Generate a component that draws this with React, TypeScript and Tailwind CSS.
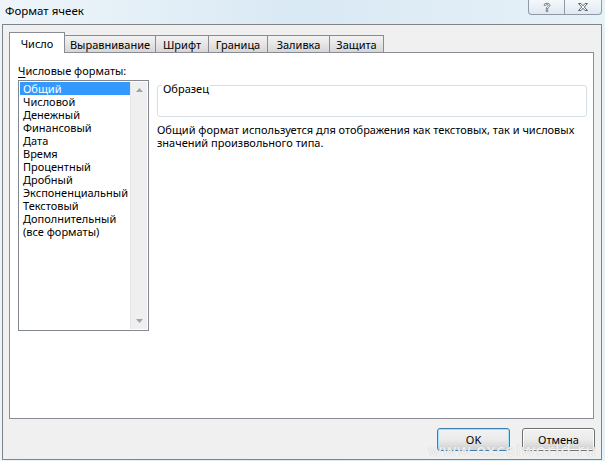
import React from 'react'

const formats = [
  'Общий',
  'Числовой',
  'Денежный',
  'Финансовый',
  'Дата',
  'Время',
  'Процентный',
  'Дробный',
  'Экспоненциальный',
  'Текстовый',
  'Дополнительный',
  '(все форматы)',
]

const tabs = [
  { label: 'Число', w: 'w-[56px]' },
  { label: 'Выравнивание', w: 'w-[92px]' },
  { label: 'Шрифт', w: 'w-[54px]' },
  { label: 'Граница', w: 'w-[60px]' },
  { label: 'Заливка', w: 'w-[63px]' },
  { label: 'Защита', w: 'w-[55px]' },
]

// Title bar caption buttons (help + close)
const CaptionButtons: React.FC = () => (
  <div className="flex h-[15px] mr-[3px]">
    <div className="w-[37px] h-full flex items-center justify-center border border-t-0 border-[#8d9aa6] rounded-bl-[4px] bg-gradient-to-b from-[#f4f8fb] to-[#dfe9f1]">
      <svg width="8" height="11" viewBox="0 0 8 11">
        <path
          d="M1 3.2 C1 0.6 7 0.6 7 3.2 C7 5 4.8 5 4.8 6.8 L3.2 6.8 C3.2 4.6 5.3 4.4 5.3 3.3 C5.3 2 2.7 2 2.7 3.4 Z M3.2 7.8 L4.8 7.8 L4.8 9.6 L3.2 9.6 Z"
          fill="#ffffff"
          stroke="#5b6670"
          strokeWidth="0.8"
          strokeLinejoin="round"
        />
      </svg>
    </div>
    <div className="w-[38px] h-full -ml-px flex items-center justify-center border border-t-0 border-[#8d9aa6] rounded-br-[4px] bg-gradient-to-b from-[#f4f8fb] to-[#dfe9f1]">
      <svg width="12" height="10" viewBox="0 0 12 10">
        <path
          d="M1.5 1.5 L4 1.5 L6 3.8 L8 1.5 L10.5 1.5 L7.3 5 L10.5 8.5 L8 8.5 L6 6.2 L4 8.5 L1.5 8.5 L4.7 5 Z"
          fill="#ffffff"
          stroke="#5b6670"
          strokeWidth="1"
          strokeLinejoin="round"
        />
      </svg>
    </div>
  </div>
)

const Tabs: React.FC = () => (
  <div className="relative z-10 -mb-px flex items-end">
    {tabs.map((t, i) =>
      i === 0 ? (
        <div
          key={t.label}
          className={`${t.w} h-[21px] border border-b-0 border-[#898c95] bg-white flex items-start justify-center pt-[4px]`}
        >
          {t.label}
        </div>
      ) : (
        <div
          key={t.label}
          className={`${t.w} -ml-px h-[18px] border border-[#898c95] bg-gradient-to-b from-[#f2f2f2] via-[#e6e6e6] to-[#d6d6d6] flex items-start justify-center pt-[2px]`}
        >
          {t.label}
        </div>
      ),
    )}
  </div>
)

const FormatList: React.FC = () => (
  <div className="w-[131px] h-[251px] border border-[#828790] bg-white flex p-px">
    <div className="flex-1 flex flex-col">
      {formats.map((f, i) => (
        <div
          key={f}
          className={`h-[13px] leading-[13px] pl-[3px] whitespace-nowrap ${
            i === 0 ? 'bg-[#3399ff] text-white' : 'text-black'
          }`}
        >
          {f}
        </div>
      ))}
    </div>
    <div className="w-[17px] bg-[#efefef] border-l border-[#e6e6e6] flex flex-col justify-between items-center py-[6px]">
      <svg width="7" height="4" viewBox="0 0 7 4">
        <path d="M0 4 L3.5 0 L7 4 Z" fill="#a3a3a3" />
      </svg>
      <svg width="7" height="4" viewBox="0 0 7 4">
        <path d="M0 0 L3.5 4 L7 0 Z" fill="#a3a3a3" />
      </svg>
    </div>
  </div>
)

const DialogButton: React.FC<{ label: string; primary?: boolean }> = ({ label, primary }) => (
  <button
    className={`w-[73px] h-[23px] rounded-[3px] border bg-gradient-to-b from-[#f2f2f2] via-[#ebebeb] to-[#cfcfcf] text-black ${
      primary
        ? 'border-[#3c7fb1] shadow-[inset_0_0_0_1px_#a7e1f7]'
        : 'border-[#707070] shadow-[inset_0_0_0_1px_#fcfcfc]'
    }`}
  >
    {label}
  </button>
)

export default function App() {
  return (
    <div
      className="w-[605px] h-[461px] flex flex-col text-[11px] leading-[13px] text-black bg-gradient-to-r from-[#eef5fa] via-[#d9e9f4] to-[#e7f1f8] overflow-hidden"
      style={{ fontFamily: '"Noto Sans", "DejaVu Sans", sans-serif' }}
    >
      {/* title bar */}
      <div className="h-[24px] flex items-start justify-between">
        <div className="pl-[5px] pt-[4px] text-[11.5px]">Формат ячеек</div>
        <CaptionButtons />
      </div>

      {/* window body */}
      <div className="relative ml-[2px] mr-[3px] h-[436px] border border-[#7f8489] bg-[#f0f0f0] pl-[6px] pt-[7px] flex flex-col">
        <Tabs />
        <div className="w-[585px] h-[367px] border border-[#898c95] bg-white pl-[8px] pt-[10px] flex">
          <div className="flex flex-col">
            <div className="h-[16px] leading-[16px]">
              <span className="underline underline-offset-2">Ч</span>исловые форматы:
            </div>
            <div className="mt-px">
              <FormatList />
            </div>
          </div>
          <div className="ml-[8px] w-[430px] pt-[22px] flex flex-col">
            <div className="relative h-[32px] rounded-[3px] border border-[#d5dfe5]">
              <span className="absolute left-[4px] -top-[4px] bg-white px-px leading-[13px]">Образец</span>
            </div>
            <p className="mt-[6px] leading-[13px]">
              Общий формат используется для отображения как текстовых, так и числовых
              <br />
              значений произвольного типа.
            </p>
          </div>
        </div>

        <div className="mt-[9px] pr-[6px] flex justify-end gap-[12px]">
          <DialogButton label="OK" primary />
          <DialogButton label="Отмена" />
        </div>

        {/* watermark */}
        <div className="absolute right-[4px] bottom-[3px] text-[17px] tracking-[1px] text-white/80 [text-shadow:0_0_1px_#b8b8b8] pointer-events-none">
          www.excelworld.ru
        </div>
      </div>
    </div>
  )
}
